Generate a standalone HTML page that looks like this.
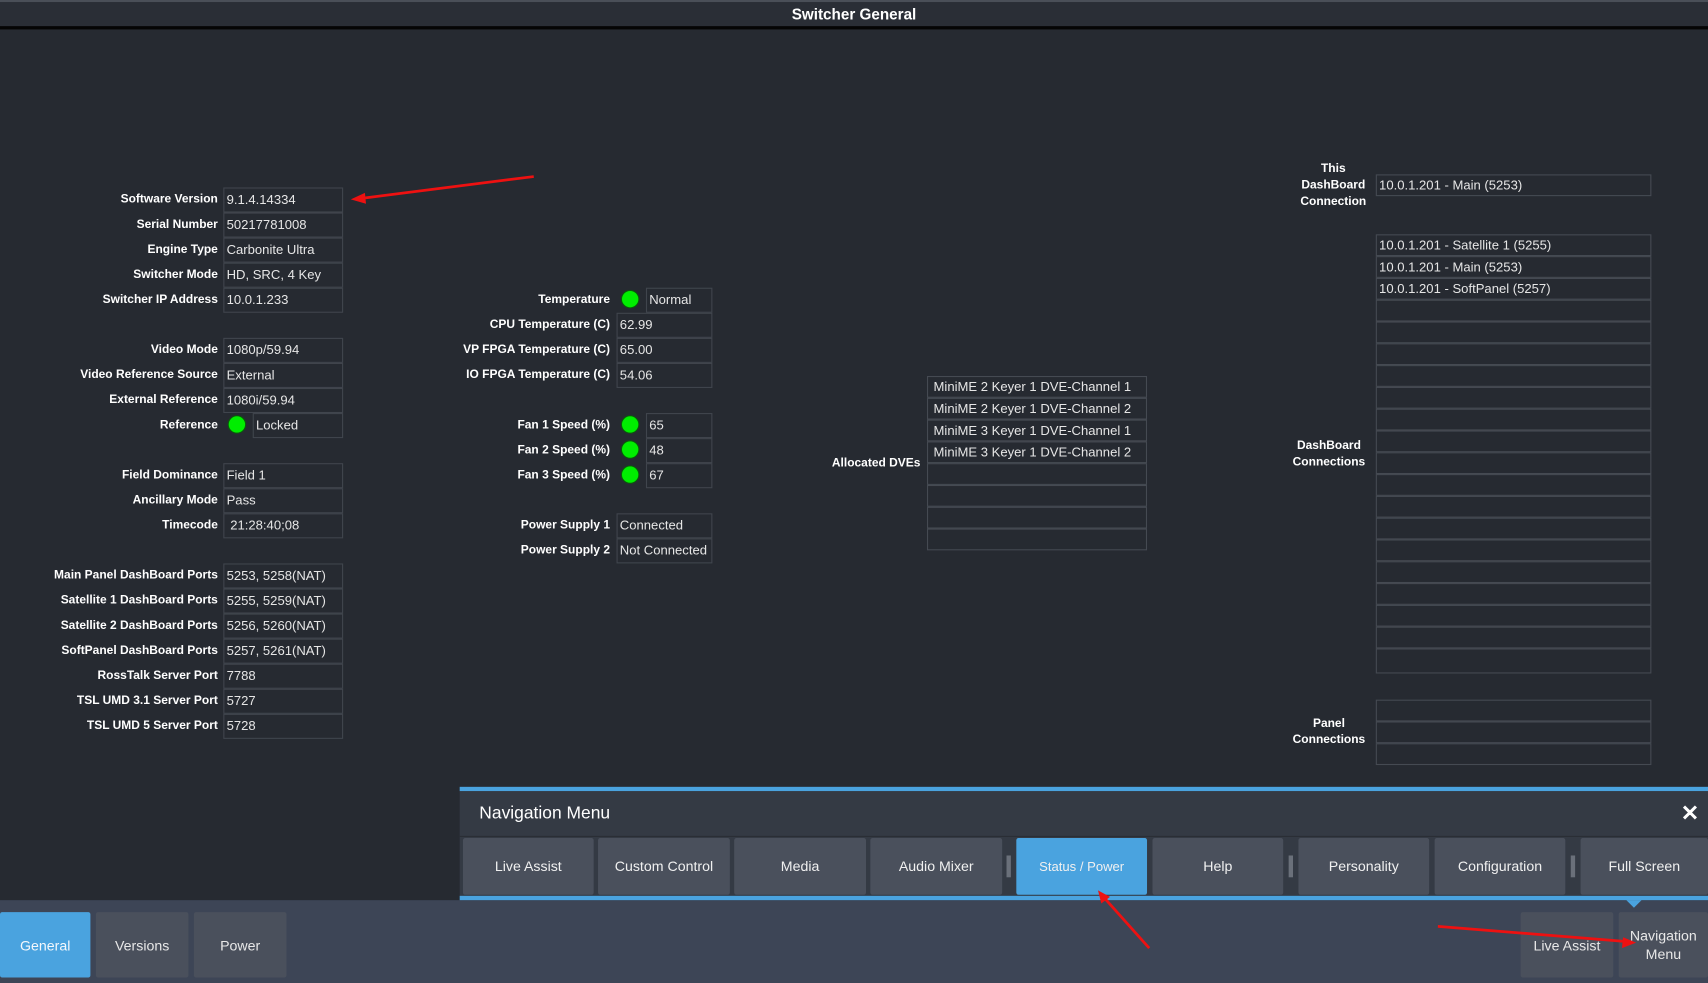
<!DOCTYPE html>
<html><head><meta charset="utf-8"><style>
*{margin:0;padding:0;box-sizing:border-box}
html,body{width:1708px;height:983px;overflow:hidden;background:#262a31;font-family:"Liberation Sans",sans-serif}
#w{position:absolute;left:0;top:0;width:1568px;height:902px;transform:scale(1.0893,1.0898);transform-origin:0 0;background:#262a31}
.a{position:absolute}
.l{position:absolute;color:#fff;font-weight:bold;font-size:11px;text-align:right;line-height:22px;white-space:nowrap}
.b{position:absolute;border:1px solid #40454d;color:#e6e6e6;font-size:12px;line-height:20px;padding-left:2px;white-space:nowrap;overflow:hidden}
.d{position:absolute;width:17px;height:17px;border-radius:50%;background:#00ee00;border:1px solid #0a5a0a}
.r{position:absolute;border:1px solid #454a52;height:20px;color:#e6e6e6;font-size:12px;line-height:18px;padding-left:2px}
.n{position:absolute;top:769px;height:52px;background:#4a505c;color:#f0f0f0;font-size:13px;text-align:center;line-height:52px;border-radius:2px}
.s{position:absolute;top:785px;width:4px;height:20px;background:#6a707a}
.m{position:absolute;top:837px;height:60px;background:#4a505c;color:#e8e8e8;font-size:13px;text-align:center;display:flex;align-items:center;justify-content:center;border-radius:2px}
</style></head><body><div id="w">
<div class="a" style="left:0;top:0;width:1568px;height:2px;background:#4a4f58"></div>
<div class="a" style="left:0;top:2px;width:1568px;height:22px;background:#2a2e36;color:#fff;font-size:14px;font-weight:bold;text-align:center;line-height:22px">Switcher General</div>
<div class="a" style="left:0;top:24px;width:1568px;height:3px;background:#050505"></div>

<div class="l" style="right:1368px;top:172px">Software Version</div><div class="b" style="left:205px;top:172px;width:110px;height:23px">9.1.4.14334</div>
<div class="l" style="right:1368px;top:195px">Serial Number</div><div class="b" style="left:205px;top:195px;width:110px;height:23px">50217781008</div>
<div class="l" style="right:1368px;top:218px">Engine Type</div><div class="b" style="left:205px;top:218px;width:110px;height:23px">Carbonite Ultra</div>
<div class="l" style="right:1368px;top:241px">Switcher Mode</div><div class="b" style="left:205px;top:241px;width:110px;height:23px">HD, SRC, 4 Key</div>
<div class="l" style="right:1368px;top:264px">Switcher IP Address</div><div class="b" style="left:205px;top:264px;width:110px;height:23px">10.0.1.233</div>
<div class="l" style="right:1368px;top:310px">Video Mode</div><div class="b" style="left:205px;top:310px;width:110px;height:23px">1080p/59.94</div>
<div class="l" style="right:1368px;top:333px">Video Reference Source</div><div class="b" style="left:205px;top:333px;width:110px;height:23px">External</div>
<div class="l" style="right:1368px;top:356px">External Reference</div><div class="b" style="left:205px;top:356px;width:110px;height:23px">1080i/59.94</div>
<div class="l" style="right:1368px;top:379px">Reference</div><div class="d" style="left:209px;top:381px"></div><div class="b" style="left:232px;top:379px;width:83px;height:23px">Locked</div>
<div class="l" style="right:1368px;top:425px">Field Dominance</div><div class="b" style="left:205px;top:425px;width:110px;height:23px">Field 1</div>
<div class="l" style="right:1368px;top:448px">Ancillary Mode</div><div class="b" style="left:205px;top:448px;width:110px;height:23px">Pass</div>
<div class="l" style="right:1368px;top:471px">Timecode</div><div class="b" style="left:205px;top:471px;width:110px;height:23px">&nbsp;21:28:40;08</div>
<div class="l" style="right:1368px;top:517px">Main Panel DashBoard Ports</div><div class="b" style="left:205px;top:517px;width:110px;height:23px">5253, 5258(NAT)</div>
<div class="l" style="right:1368px;top:540px">Satellite 1 DashBoard Ports</div><div class="b" style="left:205px;top:540px;width:110px;height:23px">5255, 5259(NAT)</div>
<div class="l" style="right:1368px;top:563px">Satellite 2 DashBoard Ports</div><div class="b" style="left:205px;top:563px;width:110px;height:23px">5256, 5260(NAT)</div>
<div class="l" style="right:1368px;top:586px">SoftPanel DashBoard Ports</div><div class="b" style="left:205px;top:586px;width:110px;height:23px">5257, 5261(NAT)</div>
<div class="l" style="right:1368px;top:609px">RossTalk Server Port</div><div class="b" style="left:205px;top:609px;width:110px;height:23px">7788</div>
<div class="l" style="right:1368px;top:632px">TSL UMD 3.1 Server Port</div><div class="b" style="left:205px;top:632px;width:110px;height:23px">5727</div>
<div class="l" style="right:1368px;top:655px">TSL UMD 5 Server Port</div><div class="b" style="left:205px;top:655px;width:110px;height:23px">5728</div>

<div class="l" style="right:1008px;top:264px">Temperature</div><div class="d" style="left:570px;top:266px"></div><div class="b" style="left:593px;top:264px;width:61px;height:23px">Normal</div>
<div class="l" style="right:1008px;top:287px">CPU Temperature (C)</div><div class="b" style="left:566px;top:287px;width:88px;height:23px">62.99</div>
<div class="l" style="right:1008px;top:310px">VP FPGA Temperature (C)</div><div class="b" style="left:566px;top:310px;width:88px;height:23px">65.00</div>
<div class="l" style="right:1008px;top:333px">IO FPGA Temperature (C)</div><div class="b" style="left:566px;top:333px;width:88px;height:23px">54.06</div>
<div class="l" style="right:1008px;top:379px">Fan 1 Speed (%)</div><div class="d" style="left:570px;top:381px"></div><div class="b" style="left:593px;top:379px;width:61px;height:23px">65</div>
<div class="l" style="right:1008px;top:402px">Fan 2 Speed (%)</div><div class="d" style="left:570px;top:404px"></div><div class="b" style="left:593px;top:402px;width:61px;height:23px">48</div>
<div class="l" style="right:1008px;top:425px">Fan 3 Speed (%)</div><div class="d" style="left:570px;top:427px"></div><div class="b" style="left:593px;top:425px;width:61px;height:23px">67</div>
<div class="l" style="right:1008px;top:471px">Power Supply 1</div><div class="b" style="left:566px;top:471px;width:88px;height:23px">Connected</div>
<div class="l" style="right:1008px;top:494px">Power Supply 2</div><div class="b" style="left:566px;top:494px;width:88px;height:23px">Not Connected</div>

<div class="l" style="right:723px;top:414px">Allocated DVEs</div>
<div class="r" style="left:851px;top:345px;width:202px;padding-left:5px">MiniME 2 Keyer 1 DVE-Channel 1</div>
<div class="r" style="left:851px;top:365px;width:202px;padding-left:5px">MiniME 2 Keyer 1 DVE-Channel 2</div>
<div class="r" style="left:851px;top:385px;width:202px;padding-left:5px">MiniME 3 Keyer 1 DVE-Channel 1</div>
<div class="r" style="left:851px;top:405px;width:202px;padding-left:5px">MiniME 3 Keyer 1 DVE-Channel 2</div>
<div class="r" style="left:851px;top:425px;width:202px"></div>
<div class="r" style="left:851px;top:445px;width:202px"></div>
<div class="r" style="left:851px;top:465px;width:202px"></div>
<div class="r" style="left:851px;top:485px;width:202px"></div>

<div class="a" style="left:1180px;top:148px;width:88px;color:#fff;font-weight:bold;font-size:11px;line-height:15px;text-align:center">This<br>DashBoard<br>Connection</div>
<div class="r" style="left:1263px;top:160px;width:253px">10.0.1.201 - Main (5253)</div>
<div class="a" style="left:1176px;top:402px;width:88px;color:#fff;font-weight:bold;font-size:11px;line-height:15px;text-align:center">DashBoard<br>Connections</div>
<div class="a" style="left:1176px;top:657px;width:88px;color:#fff;font-weight:bold;font-size:11px;line-height:15px;text-align:center">Panel<br>Connections</div>
<div class="r" style="left:1263px;top:215px;width:253px">10.0.1.201 - Satellite 1 (5255)</div>
<div class="r" style="left:1263px;top:235px;width:253px">10.0.1.201 - Main (5253)</div>
<div class="r" style="left:1263px;top:255px;width:253px">10.0.1.201 - SoftPanel (5257)</div>
<div class="r" style="left:1263px;top:275px;width:253px"></div>
<div class="r" style="left:1263px;top:295px;width:253px"></div>
<div class="r" style="left:1263px;top:315px;width:253px"></div>
<div class="r" style="left:1263px;top:335px;width:253px"></div>
<div class="r" style="left:1263px;top:355px;width:253px"></div>
<div class="r" style="left:1263px;top:375px;width:253px"></div>
<div class="r" style="left:1263px;top:395px;width:253px"></div>
<div class="r" style="left:1263px;top:415px;width:253px"></div>
<div class="r" style="left:1263px;top:435px;width:253px"></div>
<div class="r" style="left:1263px;top:455px;width:253px"></div>
<div class="r" style="left:1263px;top:475px;width:253px"></div>
<div class="r" style="left:1263px;top:495px;width:253px"></div>
<div class="r" style="left:1263px;top:515px;width:253px"></div>
<div class="r" style="left:1263px;top:535px;width:253px"></div>
<div class="r" style="left:1263px;top:555px;width:253px"></div>
<div class="r" style="left:1263px;top:575px;width:253px"></div>
<div class="r" style="left:1263px;top:595px;width:253px;height:23px"></div>
<div class="r" style="left:1263px;top:642px;width:253px"></div>
<div class="r" style="left:1263px;top:662px;width:253px"></div>
<div class="r" style="left:1263px;top:682px;width:253px"></div>

<!-- bottom bar -->
<div class="a" style="left:0;top:826px;width:1568px;height:76px;background:#3d4556"></div>
<div class="m" style="left:0;width:83px;background:#4aa3df;color:#f4f8fc">General</div>
<div class="m" style="left:88px;width:85px">Versions</div>
<div class="m" style="left:178px;width:85px">Power</div>
<div class="m" style="left:1396px;width:85px">Live Assist</div>
<div class="m" style="left:1486px;width:82px;line-height:17px">Navigation<br>Menu</div>
<div class="a" style="left:1493px;top:826px;width:0;height:0;border-left:7px solid transparent;border-right:7px solid transparent;border-top:7px solid #4aa3df"></div>

<!-- nav panel -->
<div class="a" style="left:422px;top:722px;width:1146px;height:4px;background:#4aa3df"></div>
<div class="a" style="left:422px;top:726px;width:1146px;height:96px;background:#343a44"></div>
<div class="a" style="left:440px;top:737px;color:#fff;font-size:16px;line-height:20px">Navigation Menu</div>
<div class="a" style="left:1543px;top:735px;color:#fff;font-size:20px;font-weight:bold;line-height:24px">✕</div>
<div class="a" style="left:422px;top:767px;width:1146px;height:1px;background:#2a2e35"></div>
<div class="n" style="left:425px;width:120px">Live Assist</div>
<div class="n" style="left:549px;width:121px">Custom Control</div>
<div class="n" style="left:674px;width:121px">Media</div>
<div class="n" style="left:799px;width:121px">Audio Mixer</div>
<div class="s" style="left:924px"></div>
<div class="n" style="left:933px;width:120px;background:#4aa3df;font-size:12px">Status / Power</div>
<div class="n" style="left:1058px;width:120px">Help</div>
<div class="s" style="left:1183px"></div>
<div class="n" style="left:1192px;width:120px">Personality</div>
<div class="n" style="left:1317px;width:120px">Configuration</div>
<div class="s" style="left:1442px"></div>
<div class="n" style="left:1451px;width:117px">Full Screen</div>
<div class="a" style="left:422px;top:822px;width:1146px;height:4px;background:#4aa3df"></div>

<svg class="a" style="left:0;top:0" width="1568" height="902">
<g stroke="#ee1111" stroke-width="2.5" fill="#ee1111">
<line x1="490" y1="162" x2="332" y2="182"/><polygon points="322,183 335,177 336,187" stroke="none"/>
<line x1="1055" y1="870" x2="1013" y2="823"/><polygon points="1008,817 1019,823 1011,829" stroke="none"/>
<line x1="1320" y1="850" x2="1494" y2="864"/><polygon points="1502,865 1490,860 1489,870" stroke="none"/>
</g></svg>
</div></body></html>
